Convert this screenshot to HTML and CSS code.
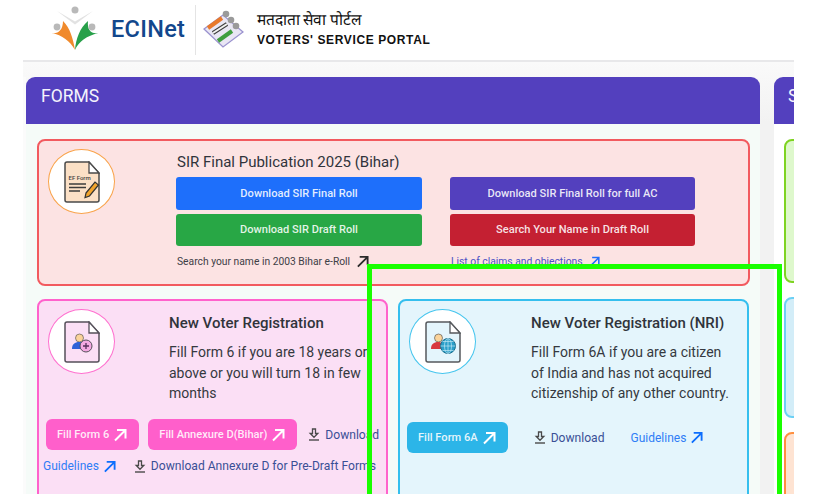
FILE: index.html
```html
<!DOCTYPE html>
<html lang="en">
<head>
<meta charset="utf-8">
<title>Voters' Service Portal</title>
<link rel="stylesheet" href="styles.css">
</head>
<body>
<svg class="defs" width="0" height="0" aria-hidden="true">
  <symbol id="arrow" viewBox="0 0 14 14"><path d="M2 12.500 12 2.500M4 2h8.500v8.500" fill="none" stroke="currentColor" stroke-width="2"/></symbol>
  <symbol id="dl" viewBox="0 0 12 13"><path d="M4.500 1h3v4.500h2.300L6 9.300 2.200 5.500h2.300z" fill="none" stroke="currentColor" stroke-width="1.300"/><path d="M1 12h10" stroke="currentColor" stroke-width="1.400"/></symbol>
</svg>
<div class="shell">
  <header class="top">
    <svg class="eci-logo" viewBox="50 8 50 46" width="50" height="46" aria-hidden="true">
      <path d="M57 13 75 23.500 93 13 75 26.500z" fill="#e2e2e2"/>
      <path d="M52 35C58 36 63 32 63 23 70 30 73 40 75 52 70 43 62 37 52 35z" fill="#f08a2c"/>
      <path d="M98 35C91 36 87 32 88 23 80 30 76 40 75 52 79 43 87 38 98 35z" fill="#28a04a"/>
      <circle cx="75" cy="12" r="3.500" fill="#b9b9b9"/>
      <circle cx="57" cy="29" r="3.400" fill="#b9b9b9"/>
      <circle cx="92" cy="29" r="3.400" fill="#b9b9b9"/>
    </svg>
    <span class="eci-name">ECINet</span>
    <span class="top-rule"></span>
    <svg class="evm-logo" viewBox="203 10 41 38" width="41" height="38" aria-hidden="true">
      <path d="M204 29l19-14 20 17-20 15z" fill="#e9e6f4" stroke="#9b93cf" stroke-width="1.300"/>
      <path d="M208 28l14-10" stroke="#e8792b" stroke-width="4"/>
      <path d="M213 33l14-9" stroke="#3c3c3c" stroke-width="4"/>
      <path d="M213 33l14-9" stroke="#f2f2f2" stroke-width="2"/>
      <path d="M218 41l14-10" stroke="#3f9e3f" stroke-width="4"/>
      <circle cx="226" cy="14" r="3.300" fill="#9a9a9a"/>
      <circle cx="231" cy="20" r="3.300" fill="#9a9a9a"/>
      <circle cx="236" cy="26" r="3.300" fill="#9a9a9a"/>
    </svg>
    <div class="portal">
      <div class="portal-hi" lang="hi">मतदाता सेवा पोर्टल</div>
      <div class="portal-en">VOTERS' SERVICE PORTAL</div>
    </div>
  </header>

  <main class="board">
    <section class="panel panel-forms">
      <h2 class="panel-head">FORMS</h2>
      <div class="panel-body">
        <article class="card card-sir">
          <div class="icon-col icon-col-wide">
            <div class="disc disc-sir">
              <svg viewBox="0 0 36 42" width="36" height="42" aria-hidden="true">
                <path d="M3 1h22l10 11v27a2 2 0 0 1-2 2H3a2 2 0 0 1-2-2V3a2 2 0 0 1 2-2z" fill="#fbe0c6" stroke="#4a4a4a" stroke-width="1.500"/>
                <path d="M25 1v11h10z" fill="#fff" stroke="#4a4a4a" stroke-width="1.300"/>
                <text x="4.500" y="19" class="ef-text">EF Form</text>
                <path d="M5 23h17M5 26.500h17M5 30h11" stroke="#3c3c3c" stroke-width="1.300"/>
                <path d="M22 32l9-11 3.500 3-9 11-4.500 1.500z" fill="#f2a42c" stroke="#333" stroke-width="1.200"/>
              </svg>
            </div>
          </div>
          <div class="sir-main">
            <h3 class="sir-title">SIR Final Publication 2025 (Bihar)</h3>
            <div class="sir-grid">
              <a class="sir-btn btn-blue">Download SIR Final Roll</a>
              <a class="sir-btn btn-purple">Download SIR Final Roll for full AC</a>
              <a class="sir-btn btn-green">Download SIR Draft Roll</a>
              <a class="sir-btn btn-red">Search Your Name in Draft Roll</a>
              <a class="sir-link link-dark">Search your name in 2003 Bihar e-Roll <svg class="arrow-lg"><use href="#arrow"/></svg></a>
              <a class="sir-link link-purple">List of claims and objections <svg class="arrow-md"><use href="#arrow"/></svg></a>
            </div>
          </div>
        </article>

        <div class="card-row">
          <article class="card card-pink">
            <div class="card-top">
              <div class="icon-col">
                <div class="disc disc-pink">
                  <svg viewBox="0 0 36 42" width="36" height="42" aria-hidden="true">
                    <path d="M3 1h22l10 11v27a2 2 0 0 1-2 2H3a2 2 0 0 1-2-2V3a2 2 0 0 1 2-2z" fill="#fbdff5" stroke="#55505a" stroke-width="1.500"/>
                    <path d="M25 1v11h10z" fill="#fff" stroke="#55505a" stroke-width="1.300"/>
                    <circle cx="15.500" cy="17" r="4" fill="#fbd39a" stroke="#444" stroke-width=".6"/>
                    <path d="M8 28c0-5 3-7 7-7s6 2 6 7z" fill="#2f62d8"/>
                    <circle cx="22" cy="25" r="6" fill="#f4a9e2" stroke="#55505a" stroke-width="1"/>
                    <path d="M19 25h6M22 22v6" stroke="#55305a" stroke-width="1.300"/>
                  </svg>
                </div>
              </div>
              <div class="card-text">
                <h3 class="card-title">New Voter Registration</h3>
                <p class="card-desc">Fill Form 6 if you are 18 years or above or you will turn 18 in few months</p>
              </div>
            </div>
            <div class="action-row action-pink">
              <a class="fill-btn btn-pink">Fill Form 6 <svg class="arrow-btn"><use href="#arrow"/></svg></a>
              <a class="fill-btn btn-pink">Fill Annexure D(Bihar) <svg class="arrow-btn"><use href="#arrow"/></svg></a>
              <a class="dl-link"><svg class="dl-ico"><use href="#dl"/></svg> Download</a>
            </div>
            <div class="action-row action-second">
              <a class="guide-link">Guidelines <svg class="arrow-guide"><use href="#arrow"/></svg></a>
              <a class="dl-link"><svg class="dl-ico"><use href="#dl"/></svg> Download Annexure D for Pre-Draft Forms</a>
            </div>
          </article>

          <article class="card card-sky">
            <div class="card-top">
              <div class="icon-col icon-col-sky">
                <div class="disc disc-sky">
                  <svg viewBox="0 0 36 42" width="36" height="42" aria-hidden="true">
                    <path d="M3 1h22l10 11v27a2 2 0 0 1-2 2H3a2 2 0 0 1-2-2V3a2 2 0 0 1 2-2z" fill="#e4f5fc" stroke="#55585c" stroke-width="1.500"/>
                    <path d="M25 1v11h10z" fill="#fff" stroke="#55585c" stroke-width="1.300"/>
                    <circle cx="13.500" cy="17" r="4" fill="#fbd39a" stroke="#444" stroke-width=".6"/>
                    <path d="M6 28c0-5 3-7 7-7s6 2 6 7z" fill="#d8383f"/>
                    <circle cx="23" cy="25" r="7.500" fill="#2b9fc9" stroke="#1d6f8e" stroke-width="1"/>
                    <path d="M15.500 25h15M23 17.500v15M17.500 20.500h11M17.500 29.500h11" stroke="#bfe6f3" stroke-width=".7"/>
                    <ellipse cx="23" cy="25" rx="3.500" ry="7.500" fill="none" stroke="#bfe6f3" stroke-width=".7"/>
                  </svg>
                </div>
              </div>
              <div class="card-text">
                <h3 class="card-title">New Voter Registration (NRI)</h3>
                <p class="card-desc">Fill Form 6A if you are a citizen of India and has not acquired citizenship of any other country.</p>
              </div>
            </div>
            <div class="action-row action-sky">
              <a class="fill-btn btn-sky">Fill Form 6A <svg class="arrow-btn"><use href="#arrow"/></svg></a>
              <a class="dl-link dl-sky"><svg class="dl-ico"><use href="#dl"/></svg> Download</a>
              <a class="guide-link guide-sky">Guidelines <svg class="arrow-guide"><use href="#arrow"/></svg></a>
            </div>
          </article>
        </div>
      </div>
    </section>

    <section class="panel panel-side">
      <h2 class="panel-head">S</h2>
      <div class="panel-body side-body">
        <div class="side-card side-green"></div>
        <div class="side-card side-blue"></div>
        <div class="side-card side-orange"></div>
      </div>
    </section>
  </main>
</div>
<div class="frame"></div>
</body>
</html>
```

FILE: styles.css
```css
* { box-sizing: border-box; }
html, body { margin: 0; padding: 0; height: 100%; background: #fff; overflow: hidden; }
body { font-family: Roboto, "Liberation Sans", sans-serif; color: #2b2f36; }
.defs { position: absolute; }
a { text-decoration: none; }
h2, h3, p { margin: 0; }

.shell { width: 771px; height: 494px; margin-left: 23px; overflow: hidden; }

.top { height: 62px; display: flex; align-items: center; padding: 0 0 0 27px; border-bottom: 2px solid #e8e8ea; background: #fff; }
.eci-logo { flex: none; margin-top: -2px; }
.eci-name { margin: -2px 0 0 11px; font-size: 23.500px; font-weight: 500; color: #12478c; letter-spacing: .3px; width: 74px; white-space: nowrap; }
.top-rule { width: 1px; height: 50px; background: #e4e4e4; margin: 0 7px 0 10px; }
.evm-logo { flex: none; margin-top: -2px; }
.portal { margin-left: 13px; margin-top: -3px; }
.portal-hi { font-family: "Noto Sans CJK SC", "Liberation Serif", serif; font-size: 15.500px; line-height: 18px; color: #111; white-space: nowrap; margin-top: -1px; }
.portal-en { font-family: "Liberation Sans", sans-serif; font-size: 12px; font-weight: 700; line-height: 16px; letter-spacing: .62px; color: #111; margin-top: 5px; white-space: nowrap; }

.board { display: flex; gap: 14px; height: 432px; padding: 15px 0 0 3px; background: linear-gradient(#fafafa, #f2f2f2 60px); }
.panel { flex: none; }
.panel-forms { width: 734px; box-shadow: -3px 0 0 #fbfbfb; }
.panel-side { width: 20px; overflow: hidden; }
.panel-head { height: 47px; padding: 10px 0 0 15px; background: #5340be; color: #f4f3fc; font-size: 17.500px; font-weight: 400; line-height: 19px; border-radius: 9px 9px 0 0; }
.panel-side .panel-head { padding-left: 14px; border-radius: 9px 0 0 0; }
.panel-body { height: 370px; padding: 15px 10px 0 11px; background: #f5fbf8; }

.card { border: 2px solid; border-radius: 8px; padding: 8px 9px; }
.card-sir { display: flex; height: 147px; background: #fce3e3; border-color: #f25a5f; }
.icon-col { flex: none; width: 121px; }
.icon-col-wide { width: 128px; }
.icon-col-sky { width: 122px; }
.disc { width: 67px; height: 65px; border-radius: 50%; background: #fff; border: 1px solid; display: flex; align-items: center; justify-content: center; }
.disc-sir { border-color: #f9a34a; }
.disc-pink { border-color: #ff70cf; }
.disc-sky { border-color: #45c5ee; }
.ef-text { font-size: 6px; font-weight: 500; font-family: Roboto, sans-serif; fill: #444; }

.sir-main { flex: 1; min-width: 0; }
.sir-title { font-size: 15px; font-weight: 400; line-height: 20px; margin: 3px 0 0 1px; color: #30343b; }
.sir-grid { display: grid; grid-template-columns: 246px 245px; column-gap: 28px; row-gap: 4px; margin-top: 5px; }
.sir-btn { height: 32.500px; border-radius: 3px; display: flex; align-items: center; justify-content: center; font-size: 11.100px; font-weight: 500; color: rgba(255, 255, 255, .88); }
.btn-blue { background: #1e6ffb; }
.btn-green { background: #28a745; }
.btn-purple { background: #5340be; }
.btn-red { background: #c42032; }
.sir-link { display: flex; align-items: center; gap: 6px; height: 24px; margin-top: -1px; font-size: 10.300px; white-space: nowrap; padding-left: 1px; }
.link-dark { color: #3d4046; }
.link-dark svg { color: #2b2b2b; }
.link-purple { color: #4b50c4; }
.link-purple svg { color: #1e6ffb; }
.arrow-lg { width: 13px; height: 13px; }
.arrow-md { width: 11px; height: 11px; }

.card-row { display: grid; grid-template-columns: 351px 351px; gap: 10px; margin-top: 13px; }
.card-pink, .card-sky { height: 210px; }
.card-pink { background: #fbdff5; border-color: #ff62cc; }
.card-sky { background: #e4f5fc; border-color: #35bfee; }
.card-top { display: flex; height: 110px; }
.card-text { flex: 1; min-width: 0; max-width: 205px; }
.card-title { font-size: 15px; font-weight: 500; line-height: 20px; margin-top: 4px; color: #30343b; white-space: nowrap; }
.card-desc { font-size: 14px; line-height: 20.500px; margin-top: 9px; color: #35393f; }

.action-row { display: flex; align-items: center; white-space: nowrap; }
.action-pink { gap: 9px; margin-left: -2px; }
.action-second { margin: 9px 0 0 -5px; }
.action-sky { margin: 3px 0 0 -2px; }
.fill-btn { height: 31px; padding: 0 12px 0 11px; border-radius: 6px; display: flex; align-items: center; gap: 4px; font-size: 11.100px; font-weight: 500; color: rgba(255, 255, 255, .88); }
.btn-pink { background: #ff5fcb; }
.btn-sky { background: #2cb5e8; }
.arrow-btn { width: 14px; height: 14px; color: #fff; }
.dl-link { display: flex; align-items: center; gap: 5px; font-size: 12.100px; color: #3a4f96; }
.dl-ico { width: 12px; height: 13px; color: #4a4a4a; }
.action-pink .dl-link { margin-left: 2px; }
.action-second .dl-link { margin-left: 18px; }
.dl-sky { margin-left: 26px; }
.guide-link { display: flex; align-items: center; gap: 4px; font-size: 12px; color: #2f7df6; }
.guide-sky { margin-left: 26px; }
.arrow-guide { width: 13px; height: 13px; color: #0d6efd; }

.side-body { padding: 15px 0 0 10px; background: #fff; width: 20px; }
.side-card { width: 40px; border: 2px solid; border-radius: 8px; }
.side-green { height: 144px; background: #def8cc; border-color: #7ed321; }
.side-blue { height: 121px; margin-top: 14px; background: #d3edf8; border-color: #6cd0f5; }
.side-orange { height: 80px; margin-top: 14px; background: #fee3d2; border-color: #ff8f3f; }

.frame { position: absolute; left: 367px; top: 264px; width: 415px; height: 230px; border: 5.500px solid #1aff00; border-bottom: 0; pointer-events: none; }
```
